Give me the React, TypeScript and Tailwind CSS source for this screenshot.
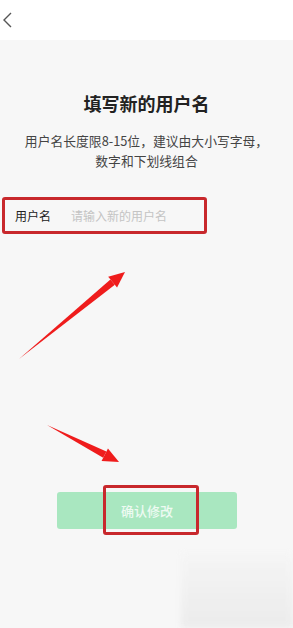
import React from "react";

function Arrow({ x1, y1, x2, y2 }: { x1: number; y1: number; x2: number; y2: number }) {
  const dx = x2 - x1;
  const dy = y2 - y1;
  const len = Math.sqrt(dx * dx + dy * dy);
  const ux = dx / len;
  const uy = dy / len;
  const px = -uy;
  const py = ux;
  const headLen = 16;
  const headW = 7;
  const bx = x2 - ux * headLen;
  const by = y2 - uy * headLen;
  const shaft = `${x1},${y1} ${bx + px * 3.5},${by + py * 3.5} ${bx - px * 3.5},${by - py * 3.5}`;
  const head = `${x2},${y2} ${bx + px * headW},${by + py * headW} ${bx - px * headW},${by - py * headW}`;
  return (
    <g>
      <polygon points={shaft} fill="#ef1c1c" />
      <polygon points={head} fill="#ef1c1c" />
    </g>
  );
}

export default function App() {
  return (
    <div
      className="relative w-[293px] min-h-[628px] bg-[#f7f7f7] overflow-hidden"
      style={{ fontFamily: '"Noto Sans CJK SC", "Noto Sans", sans-serif' }}
    >
      {/* Header */}
      <div className="h-[40px] bg-white flex items-center pl-[1px]">
        <svg width="14" height="18" viewBox="0 0 14 18" fill="none">
          <path d="M10 2 L3 9 L10 16" stroke="#555" strokeWidth="1.4" />
        </svg>
      </div>

      {/* Content */}
      <div className="flex flex-col items-center pt-[50px]">
        <h1 className="text-[18px] leading-[26px] font-bold text-[#222]">填写新的用户名</h1>
        <p className="mt-[15px] text-[12.8px] leading-[20px] text-[#444] text-center px-[18px]">
          用户名长度限8-15位，建议由大小写字母，
          <br />
          数字和下划线组合
        </p>
      </div>

      {/* Input row */}
      <div className="relative mt-[26px] h-[37px] flex items-center pl-[15px] gap-[20px]">
        <span className="text-[12px] text-[#222]">用户名</span>
        <span className="text-[12px] text-[#c4c4c4]">请输入新的用户名</span>
        <div className="absolute left-[2px] top-0 w-[205px] h-[37px] border-[3px] border-[#c8282c] rounded-[3px]" />
      </div>

      {/* Button */}
      <div className="mt-[258px] flex justify-center">
        <div className="relative ml-[1px] w-[180px] h-[37px] rounded-[3px] bg-[#a9e7c0] flex items-center justify-center">
          <span className="text-[13px] font-medium text-white/80">确认修改</span>
          <div className="absolute left-[46px] top-[-7px] w-[96px] h-[50px] border-[3px] border-[#c8282c] rounded-[3px]" />
        </div>
      </div>

      {/* Watermark smudge */}
      <div className="absolute right-0 bottom-0 w-[112px] h-[74px] bg-gradient-to-b from-[#f5f5f5] to-[#e9e9e9] blur-[3px] opacity-80" />

      {/* Annotation arrows */}
      <svg className="absolute left-0 top-0 pointer-events-none" width="293" height="628">
        <Arrow x1={19} y1={359} x2={125} y2={272} />
        <Arrow x1={47} y1={425} x2={119} y2={462} />
      </svg>
    </div>
  );
}
